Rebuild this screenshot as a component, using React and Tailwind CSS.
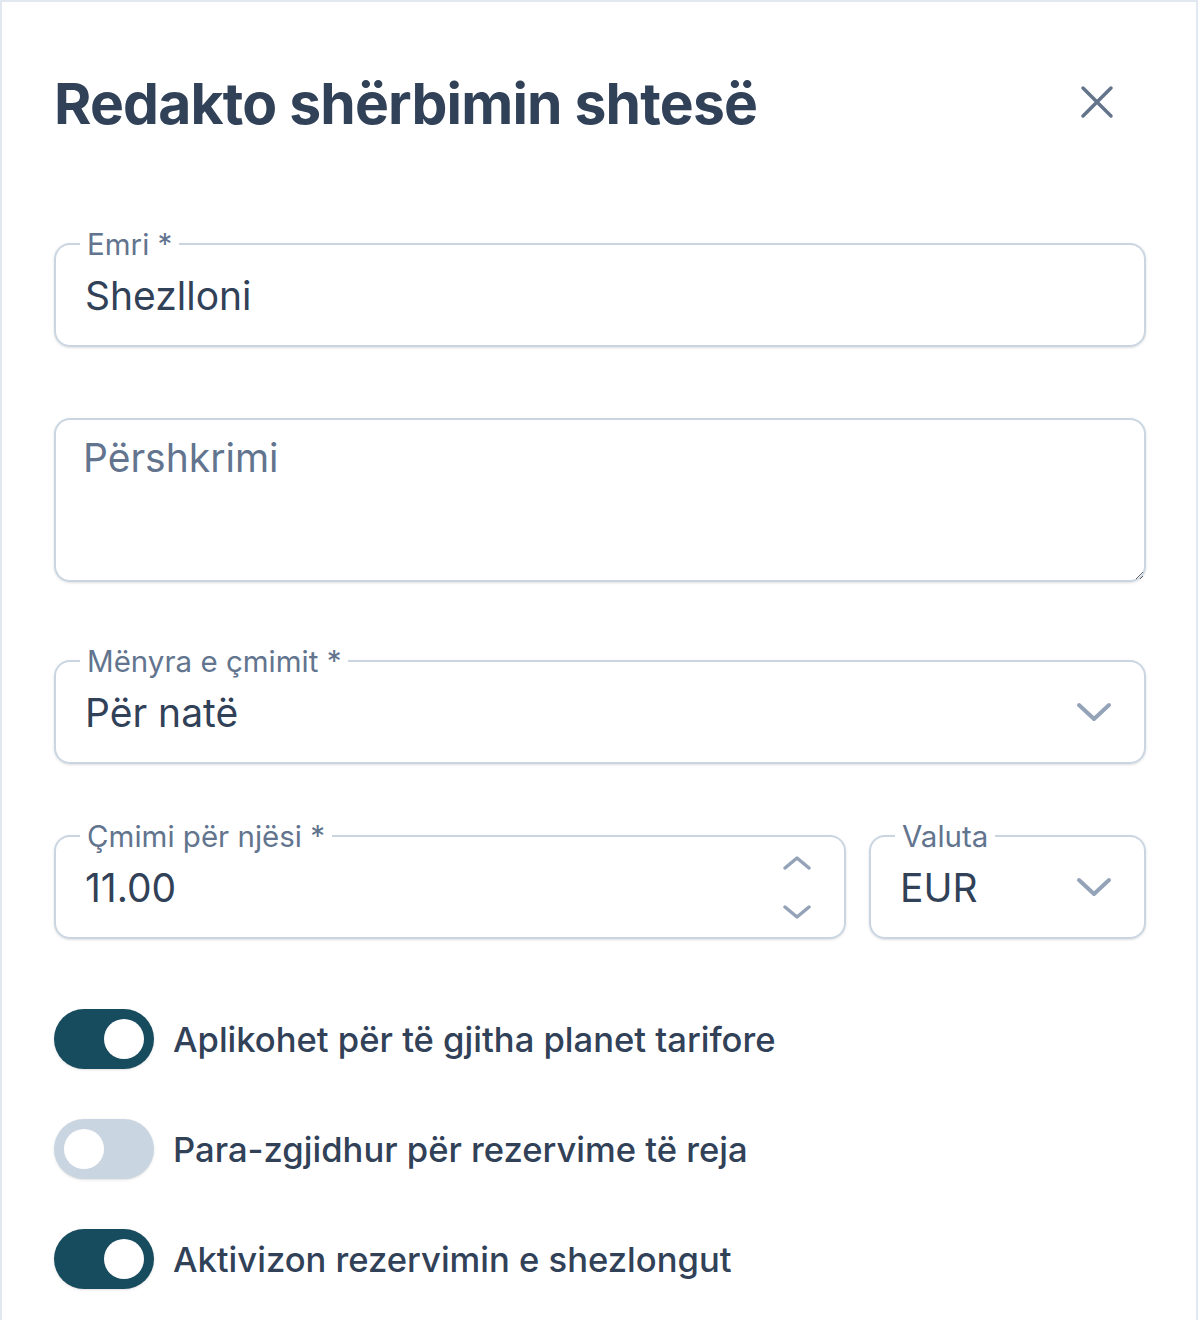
import React, { useState } from "react";

const ChevronDown = () => (
  <svg width="36" height="20" viewBox="0 0 36 20" fill="none">
    <path
      d="M3 3L18 17L33 3"
      stroke="#94a3b8"
      strokeWidth="4"
      strokeLinecap="round"
      strokeLinejoin="round"
    />
  </svg>
);

const SmallChevron = ({ up }) => (
  <svg width="30" height="14" viewBox="0 0 30 14" fill="none">
    <path
      d={up ? "M3 12L15 2L27 12" : "M3 2L15 12L27 2"}
      stroke="#94a3b8"
      strokeWidth="3.5"
      strokeLinecap="round"
      strokeLinejoin="round"
    />
  </svg>
);

const FloatingLabel = ({ children }) => (
  <span className="absolute -top-[15px] left-[24px] bg-white px-[7px] text-[29.5px] leading-[28px] text-slate-500">
    {children}
  </span>
);

const Toggle = ({ on, label, onClick }) => (
  <div className="flex items-center gap-[19px]">
    <button
      type="button"
      onClick={onClick}
      className={`flex h-[60px] w-[100px] shrink-0 items-center rounded-full px-[10px] shadow-sm ${on ? "justify-end bg-[#174b5e]" : "justify-start bg-slate-300"}`}
    >
      <span className="h-[40px] w-[40px] rounded-full bg-white" />
    </button>
    <span className="text-[34.6px] font-medium leading-none text-slate-700">
      {label}
    </span>
  </div>
);

export default function App() {
  const [toggles, setToggles] = useState([true, false, true]);

  const flip = (i) =>
    setToggles((prev) => prev.map((v, idx) => (idx === i ? !v : v)));

  return (
    <div
      className="min-h-[1400px] w-[1198px] border-2 border-[#e2e8f0] bg-white pt-[67px] pr-[50px] pl-[52px]"
      style={{ fontFamily: "Inter, 'Noto Sans', sans-serif" }}
    >
      {/* header */}
      <div className="flex items-center justify-between">
        <h1 className="text-[57px] leading-[70px] font-bold tracking-[-0.8px] text-slate-700">
          Redakto shërbimin shtesë
        </h1>
        <button type="button" className="mr-[32px] mt-[-4px]">
          <svg width="34" height="34" viewBox="0 0 34 34" fill="none">
            <path
              d="M3 3L31 31M31 3L3 31"
              stroke="#64748b"
              strokeWidth="3.5"
              strokeLinecap="round"
            />
          </svg>
        </button>
      </div>

      {/* name */}
      <div className="relative mt-[104px] flex h-[104px] items-center rounded-2xl border-2 border-slate-300 pl-[29px] shadow-sm">
        <FloatingLabel>Emri *</FloatingLabel>
        <input
          className="w-full bg-transparent text-[39px] leading-none text-slate-700 outline-none"
          defaultValue="Shezlloni"
        />
      </div>

      {/* description */}
      <textarea
        className="mt-[71px] block h-[164px] w-full resize-y rounded-2xl border-2 border-slate-300 pt-[14px] pl-[27px] text-[39px] leading-[48px] text-slate-700 shadow-sm outline-none placeholder:text-slate-500"
        placeholder="Përshkrimi"
      />

      {/* pricing mode */}
      <div className="relative mt-[78px] flex h-[104px] items-center justify-between rounded-2xl border-2 border-slate-300 pr-[32px] pl-[29px] shadow-sm">
        <FloatingLabel>Mënyra e çmimit *</FloatingLabel>
        <span className="text-[39px] leading-none text-slate-700">Për natë</span>
        <ChevronDown />
      </div>

      {/* price + currency */}
      <div className="mt-[71px] flex gap-[23px]">
        <div className="relative flex h-[104px] flex-1 items-center justify-between rounded-2xl border-2 border-slate-300 pr-[32px] pl-[29px] shadow-sm">
          <FloatingLabel>Çmimi për njësi *</FloatingLabel>
          <input
            className="w-full bg-transparent text-[39px] leading-none text-slate-700 outline-none"
            defaultValue="11.00"
          />
          <div className="flex flex-col gap-[35px]">
            <SmallChevron up />
            <SmallChevron />
          </div>
        </div>
        <div className="relative flex h-[104px] w-[277px] items-center justify-between rounded-2xl border-2 border-slate-300 pr-[32px] pl-[29px] shadow-sm">
          <FloatingLabel>Valuta</FloatingLabel>
          <span className="text-[39px] leading-none text-slate-700">EUR</span>
          <ChevronDown />
        </div>
      </div>

      {/* switches */}
      <div className="mt-[70px] flex flex-col gap-[50px]">
        <Toggle
          on={toggles[0]}
          onClick={() => flip(0)}
          label="Aplikohet për të gjitha planet tarifore"
        />
        <Toggle
          on={toggles[1]}
          onClick={() => flip(1)}
          label="Para-zgjidhur për rezervime të reja"
        />
        <Toggle
          on={toggles[2]}
          onClick={() => flip(2)}
          label="Aktivizon rezervimin e shezlongut"
        />
      </div>
    </div>
  );
}
